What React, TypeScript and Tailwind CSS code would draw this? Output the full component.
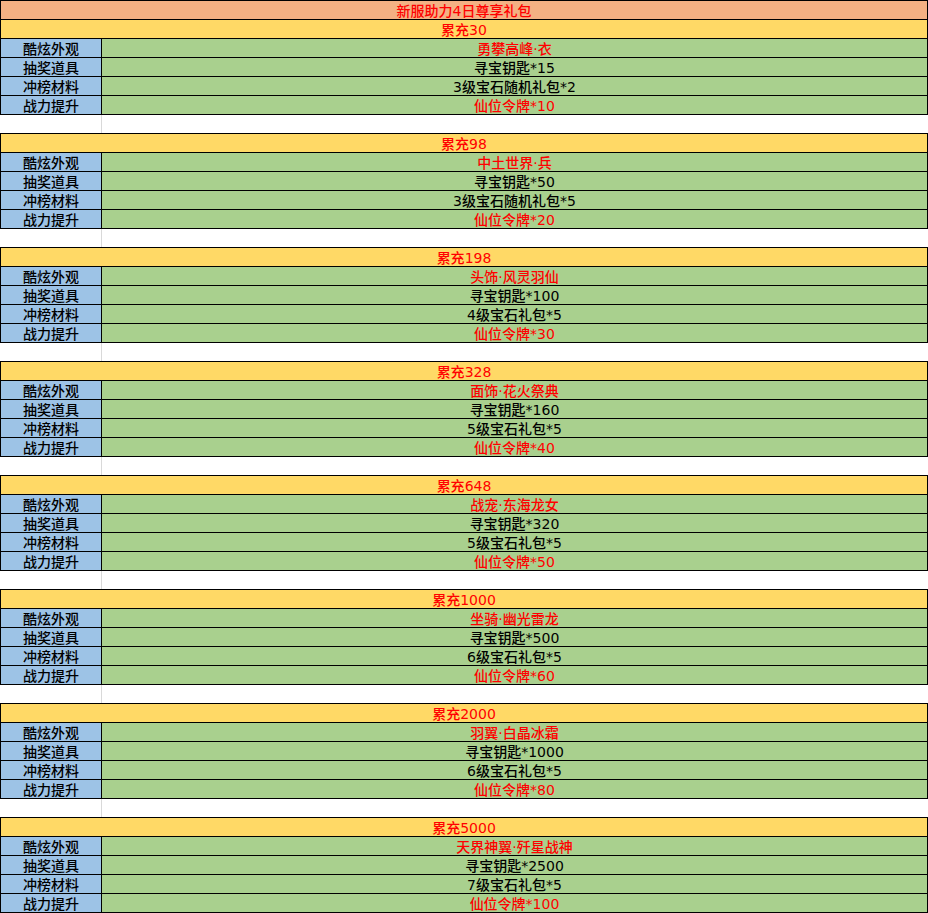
import React from "react";

type Section = { amt: string; items: string[] };

const sections: Section[] = [
  { amt: "30", items: ["勇攀高峰·衣", "寻宝钥匙*15", "3级宝石随机礼包*2", "仙位令牌*10"] },
  { amt: "98", items: ["中土世界·兵", "寻宝钥匙*50", "3级宝石随机礼包*5", "仙位令牌*20"] },
  { amt: "198", items: ["头饰·风灵羽仙", "寻宝钥匙*100", "4级宝石礼包*5", "仙位令牌*30"] },
  { amt: "328", items: ["面饰·花火祭典", "寻宝钥匙*160", "5级宝石礼包*5", "仙位令牌*40"] },
  { amt: "648", items: ["战宠·东海龙女", "寻宝钥匙*320", "5级宝石礼包*5", "仙位令牌*50"] },
  { amt: "1000", items: ["坐骑·幽光雷龙", "寻宝钥匙*500", "6级宝石礼包*5", "仙位令牌*60"] },
  { amt: "2000", items: ["羽翼·白晶冰霜", "寻宝钥匙*1000", "6级宝石礼包*5", "仙位令牌*80"] },
  { amt: "5000", items: ["天界神翼·歼星战神", "寻宝钥匙*2500", "7级宝石礼包*5", "仙位令牌*100"] },
];

const labels = ["酷炫外观", "抽奖道具", "冲榜材料", "战力提升"];

export default function App() {
  return (
    <div
      className="w-[928px] bg-white text-[14px] leading-[18px] font-medium text-black"
      style={{ fontFamily: '"DejaVu Sans", "Noto Sans CJK SC", sans-serif' }}
    >
      <div className="h-[20px] border border-black bg-[#F4B183] text-[#FF0000] flex items-center justify-center box-border pt-[1px]">
        新服助力4日尊享礼包
      </div>
      {sections.map((s, si) => (
        <React.Fragment key={s.amt}>
          <div className="h-[19px] border-x border-b border-black bg-[#FFD966] text-[#FF0000] flex items-center justify-center box-border pt-[1px]">
            累充{s.amt}
          </div>
          {s.items.map((it, i) => (
            <div key={i} className="h-[19px] border-x border-b border-black flex box-border">
              <div className="w-[101px] shrink-0 border-r border-black bg-[#9DC3E6] flex items-center justify-center pt-[1px]">
                {labels[i]}
              </div>
              <div
                className={
                  "flex-1 bg-[#A9D08E] flex items-center justify-center pt-[1px] " +
                  (i === 0 || i === 3 ? "text-[#FF0000]" : "text-black")
                }
              >
                {it}
              </div>
            </div>
          ))}
          {si < sections.length - 1 && (
            <div className="h-[19px] border-b border-black flex box-border bg-white">
              <div className="w-[102px] shrink-0 border-r border-[#D9D9D9]" />
              <div className="flex-1" />
            </div>
          )}
        </React.Fragment>
      ))}
    </div>
  );
}
